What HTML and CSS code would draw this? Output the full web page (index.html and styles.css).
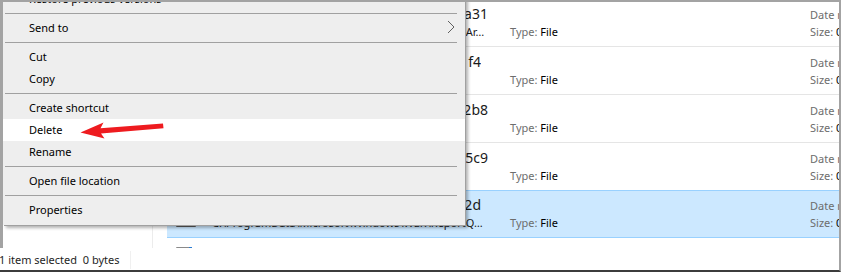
FILE: index.html
```html
<!DOCTYPE html>
<html lang="en">
<head>
    <meta charset="UTF-8">
    <title>Explorer - context menu</title>
    <link rel="stylesheet" href="styles.css">
</head>
<body>
    <div class="window">
        <div class="pane">
            <aside class="nav"></aside>

            <div class="list">
                <div class="row">
                    <div class="icon"><svg width="20" height="28" viewBox="0 0 20 28"><path d="M0.5 0.5h13l6 6v21h-19z" fill="#fff" stroke="#8a8a8a"/><path d="M13.5 0.5v6h6" fill="none" stroke="#8a8a8a"/></svg></div>
                    <div class="names">
                        <div class="name">Critical_10.0.19041_7b1d9a31</div>
                        <div class="path">C:\ProgramData\Microsoft\Windows\WER\ReportAr…</div>
                    </div>
                    <div class="type"><span class="label">Type:</span> File</div>
                    <div class="meta">
                        <div><span class="label">Date modified:</span> 5/14/2021 9:12 AM</div>
                        <div><span class="label">Size:</span> 0 bytes</div>
                    </div>
                </div>

                <div class="row">
                    <div class="icon"><svg width="20" height="28" viewBox="0 0 20 28"><path d="M0.5 0.5h13l6 6v21h-19z" fill="#fff" stroke="#8a8a8a"/><path d="M13.5 0.5v6h6" fill="none" stroke="#8a8a8a"/></svg></div>
                    <div class="names">
                        <div class="name short">AppCrash_SearchApp_e2c1f4</div>
                        <div class="path">C:\ProgramData\Microsoft\Windows\WER</div>
                    </div>
                    <div class="type"><span class="label">Type:</span> File</div>
                    <div class="meta">
                        <div><span class="label">Date modified:</span> 5/14/2021 9:10 AM</div>
                        <div><span class="label">Size:</span> 0 bytes</div>
                    </div>
                </div>

                <div class="row">
                    <div class="icon"><svg width="20" height="28" viewBox="0 0 20 28"><path d="M0.5 0.5h13l6 6v21h-19z" fill="#fff" stroke="#8a8a8a"/><path d="M13.5 0.5v6h6" fill="none" stroke="#8a8a8a"/></svg></div>
                    <div class="names">
                        <div class="name">AppHang_explorer_4f19c2b8</div>
                        <div class="path">C:\ProgramData\Microsoft\Windows\WER</div>
                    </div>
                    <div class="type"><span class="label">Type:</span> File</div>
                    <div class="meta">
                        <div><span class="label">Date modified:</span> 5/13/2021 6:41 PM</div>
                        <div><span class="label">Size:</span> 0 bytes</div>
                    </div>
                </div>

                <div class="row">
                    <div class="icon"><svg width="20" height="28" viewBox="0 0 20 28"><path d="M0.5 0.5h13l6 6v21h-19z" fill="#fff" stroke="#8a8a8a"/><path d="M13.5 0.5v6h6" fill="none" stroke="#8a8a8a"/></svg></div>
                    <div class="names">
                        <div class="name">Kernel_141_0a7e85c9</div>
                        <div class="path">C:\ProgramData\Microsoft\Windows\WER</div>
                    </div>
                    <div class="type"><span class="label">Type:</span> File</div>
                    <div class="meta">
                        <div><span class="label">Date modified:</span> 5/12/2021 2:03 PM</div>
                        <div><span class="label">Size:</span> 0 bytes</div>
                    </div>
                </div>

                <div class="row selected">
                    <div class="icon"><svg width="20" height="28" viewBox="0 0 20 28"><path d="M0.5 0.5h13l6 6v21h-19z" fill="#fff" stroke="#5a5a5a"/><path d="M13.5 0.5v6h6" fill="none" stroke="#5a5a5a"/></svg></div>
                    <div class="names">
                        <div class="name short">NonCritical_x64_3b61e12d</div>
                        <div class="path">C:\ProgramData\Microsoft\Windows\WER\ReportQ…</div>
                    </div>
                    <div class="type"><span class="label">Type:</span> File</div>
                    <div class="meta">
                        <div><span class="label">Date modified:</span> 5/12/2021 1:55 PM</div>
                        <div><span class="label">Size:</span> 0 bytes</div>
                    </div>
                </div>

                <div class="row">
                    <div class="icon"><svg width="20" height="28" viewBox="0 0 20 28"><path d="M0.5 0.5h13l6 6v21h-19z" fill="#fff" stroke="#8a8a8a"/><path d="M13.5 0.5v6h6" fill="none" stroke="#8a8a8a"/><rect x="13" y="0" width="3" height="2" fill="#2b7cd3"/></svg></div>
                    <div class="names">
                        <div class="name">Report.wer</div>
                    </div>
                </div>
            </div>
        </div>

        <div class="status">
            <span class="status-count">1 item selected&nbsp; 0 bytes</span>
        </div>

        <div class="menu">
            <div class="menu-item">Restore previous versions</div>
            <div class="menu-sep"></div>
            <div class="menu-item">
                Send to
                <svg class="chevron" width="8" height="14" viewBox="0 0 8 14"><path d="M1 1l6 6-6 6" fill="none" stroke="#606060"/></svg>
            </div>
            <div class="menu-sep"></div>
            <div class="menu-item">Cut</div>
            <div class="menu-item">Copy</div>
            <div class="menu-sep"></div>
            <div class="menu-item">Create shortcut</div>
            <div class="menu-item active">Delete</div>
            <div class="menu-item">Rename</div>
            <div class="menu-sep"></div>
            <div class="menu-item">Open file location</div>
            <div class="menu-sep"></div>
            <div class="menu-item">Properties</div>
        </div>

        <svg class="callout" width="841" height="272" viewBox="0 0 841 272">
            <polygon points="80.5,132.5 103.5,122.5 100.5,128.3 163,123.5 163.5,128.2 101,133.6 104.5,138.6" fill="#ee1b1f"/>
        </svg>
    </div>
</body>
</html>
```

FILE: styles.css
```css
body {
    margin: 0;
    font-family: "Segoe UI", "Noto Sans", sans-serif;
    font-size: 11px;
    color: #000;
    background: #fff;
}

.window {
    position: relative;
    width: 841px;
    height: 272px;
    box-sizing: border-box;
    border-top: 2px solid #a3a3a3;
    border-right: 2px solid #a3a3a3;
    border-bottom: 2px solid #3c3c3c;
    overflow: hidden;
    display: flex;
    flex-direction: column;
}

.pane {
    display: flex;
    height: 246px;
    overflow: hidden;
}

.nav {
    width: 149px;
    flex: none;
    border-left: 3px solid #a3a3a3;
    border-right: 1px solid #ececec;
}

.list {
    flex: 1;
    margin-top: -3px;
    padding-left: 14px;
    min-width: 0;
}

.row {
    display: grid;
    grid-template-columns: 45px 298px 300px 1fr;
    height: 48px;
    box-sizing: border-box;
    border-bottom: 1px solid #e5e5e5;
    white-space: nowrap;
    overflow: hidden;
}

.row.selected {
    margin-top: -1px;
    background: #cce8ff;
    border-top: 1px solid #99d1ff;
    border-bottom: 1px solid #99d1ff;
}

.icon {
    padding: 9px 0 0 9px;
}

.row.selected .icon {
    padding-top: 8px;
}

.icon svg {
    display: block;
}

.names {
    padding-top: 5px;
    min-width: 0;
    overflow: hidden;
}

.row.selected .names,
.row.selected .type,
.row.selected .meta {
    margin-top: -1px;
}

.name {
    width: 276px;
    font-size: 14px;
    line-height: 20px;
    text-align: right;
    overflow: hidden;
    color: #1a1a1a;
}

.name.short {
    width: 269px;
}

.path {
    width: 282px;
    line-height: 16px;
    overflow: hidden;
    text-overflow: ellipsis;
    color: #1a1a1a;
}

.type {
    padding-top: 25px;
    line-height: 16px;
}

.meta {
    padding-top: 7px;
    line-height: 17px;
    overflow: hidden;
}

.label {
    color: #6d6d6d;
}

.status {
    height: 22px;
    display: flex;
    align-items: center;
    color: #1e1e1e;
    white-space: nowrap;
}

.status-count {
    padding-right: 10px;
    margin-left: -1px;
    margin-top: 1px;
    border-right: 1px solid #f0f0f0;
    line-height: 18px;
}

.menu {
    position: absolute;
    left: 3px;
    top: -18px;
    width: 462px;
    padding: 4px 0;
    background: #eeeeee;
    box-shadow: 1px 1px 0 #a0a0a0, 3px 3px 3px rgba(0, 0, 0, 0.3);
}

.menu-item {
    display: flex;
    align-items: center;
    justify-content: space-between;
    height: 22px;
    box-sizing: border-box;
    padding: 0 10px 2px 26px;
    white-space: nowrap;
}

.menu-item.active {
    background: #fff;
}

.menu-sep {
    margin: 3px 8px 3px 2px;
    border-top: 1px solid #a0a0a0;
}

.chevron {
    display: block;
}

.callout {
    position: absolute;
    left: 0;
    top: -2px;
}
```
